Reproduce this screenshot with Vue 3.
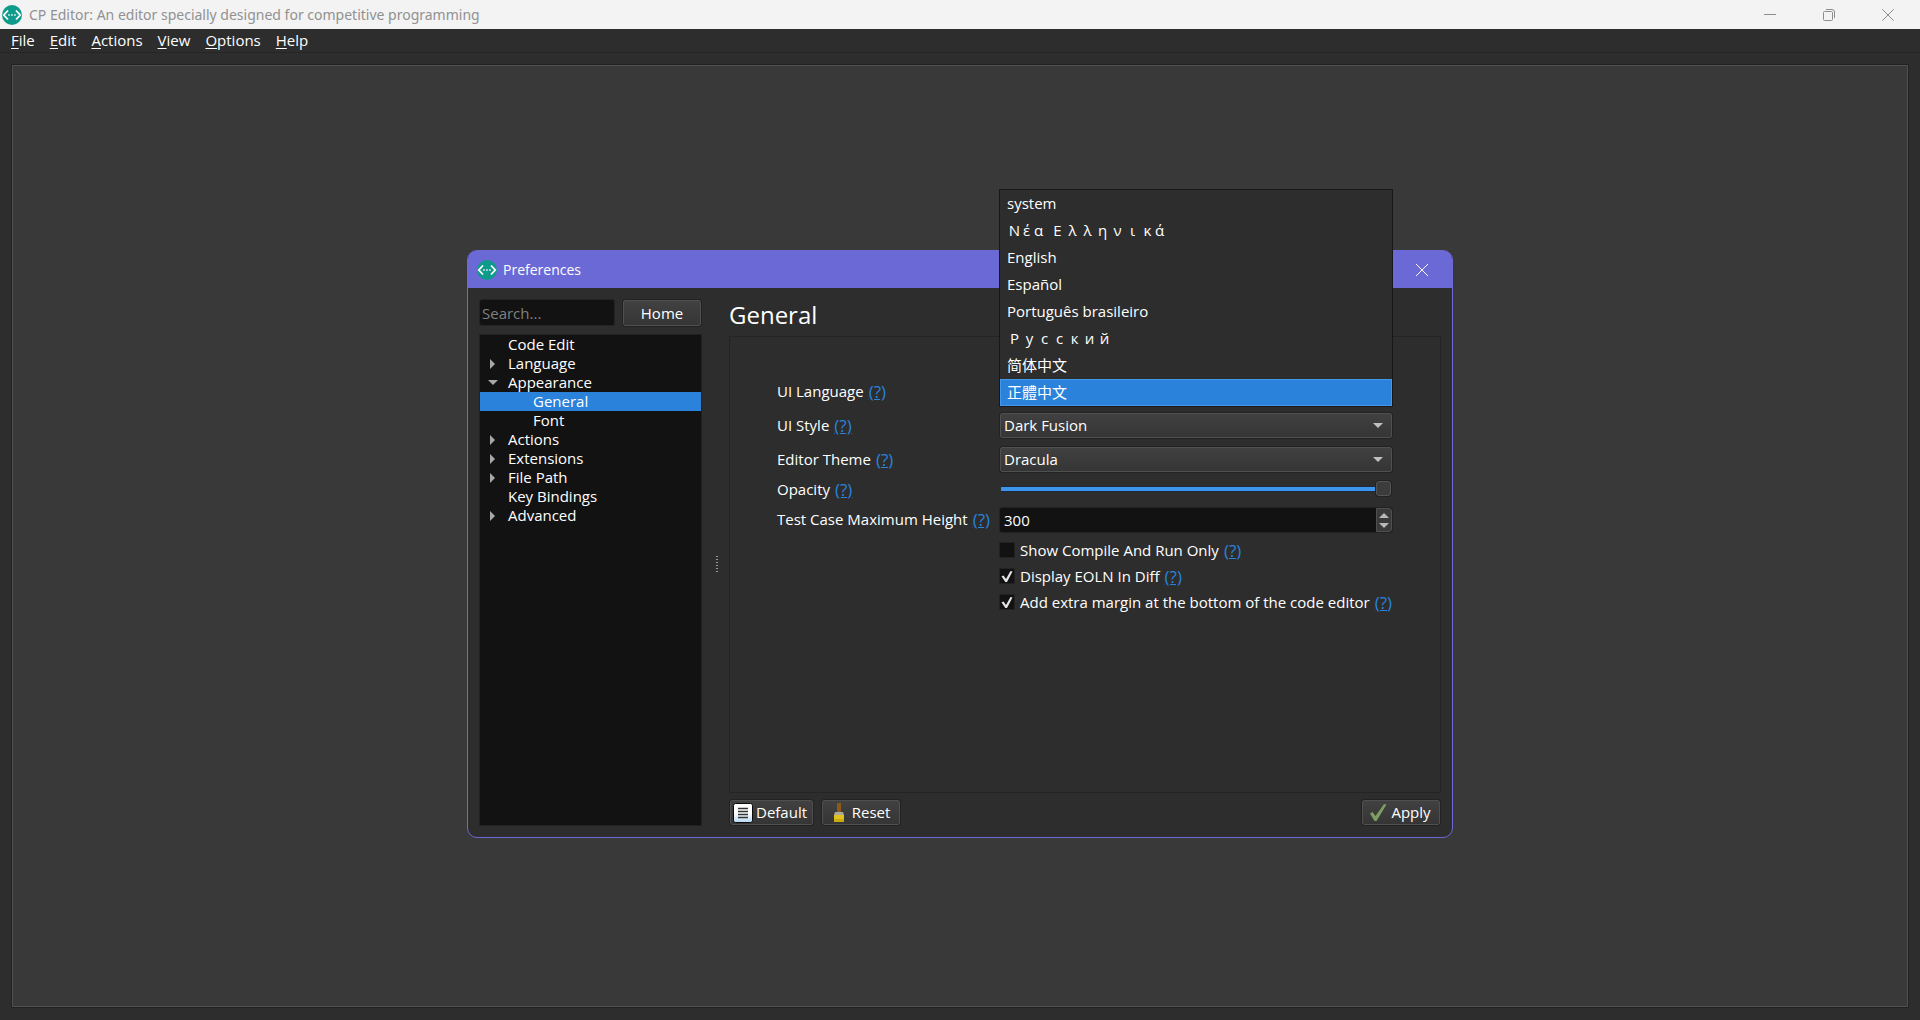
<script setup>
import { ref } from 'vue'

const menus = ['File', 'Edit', 'Actions', 'View', 'Options', 'Help']

const tree = [
  { name: 'Code Edit', level: 1 },
  { name: 'Language', level: 1, state: 'closed' },
  { name: 'Appearance', level: 1, state: 'open' },
  { name: 'General', level: 2, selected: true },
  { name: 'Font', level: 2 },
  { name: 'Actions', level: 1, state: 'closed' },
  { name: 'Extensions', level: 1, state: 'closed' },
  { name: 'File Path', level: 1, state: 'closed' },
  { name: 'Key Bindings', level: 1 },
  { name: 'Advanced', level: 1, state: 'closed' },
]

// "cells" gives the cell of each letter: w is full width, n is narrow, s is a space
const languages = [
  { name: 'system' },
  { name: 'Νέα Ελληνικά', cells: 'wnwswwwwwwwn' },
  { name: 'English' },
  { name: 'Español' },
  { name: 'Português brasileiro' },
  { name: 'Русский', cells: 'wwwwwww' },
  { name: '简体中文' },
  { name: '正體中文' },
]

const language = ref('正體中文')
const style = ref('Dark Fusion')
const theme = ref('Dracula')
const opacity = ref(100)
const height = ref(300)
const checks = ref([
  { id: 'compile', label: 'Show Compile And Run Only', on: false },
  { id: 'eoln', label: 'Display EOLN In Diff', on: true },
  { id: 'margin', label: 'Add extra margin at the bottom of the code editor', on: true },
])
</script>

<template>
  <div class="app">
    <header class="titlebar">
      <svg class="logo" viewBox="0 0 20 20" aria-hidden="true">
        <circle cx="10" cy="10" r="10" fill="#0f9b8b" />
        <path d="M6 5.500 1.800 10 6 14.500M14 5.500l4.200 4.500-4.200 4.500" fill="none" stroke="#fff" stroke-width="1.800" />
        <path d="M6.200 9.300h1.500v1.500H6.200zM9.200 9.300h1.500v1.500H9.200zM12.200 9.300h1.500v1.500h-1.500z" fill="#fff" />
      </svg>
      <h1>CP Editor: An editor specially designed for competitive programming</h1>
      <div class="controls">
        <button aria-label="Minimize">
          <svg viewBox="0 0 12 12"><path d="M0 5.500h12" /></svg>
        </button>
        <button aria-label="Restore">
          <svg viewBox="0 0 12 12">
            <rect x=".5" y="2.500" width="9" height="9" rx="1" />
            <path d="M3 .5h6a2.500 2.500 0 0 1 2.500 2.500v6" />
          </svg>
        </button>
        <button aria-label="Close">
          <svg viewBox="0 0 12 12"><path d="M.3.3l11.400 11.400M11.700.3.3 11.700" /></svg>
        </button>
      </div>
    </header>

    <nav class="menubar">
      <button v-for="m in menus" :key="m"><u>{{ m[0] }}</u>{{ m.slice(1) }}</button>
    </nav>

    <main class="workspace">
      <div class="pane">
        <section class="dialog" role="dialog" aria-labelledby="dialog-title">
          <header class="dialog-title">
            <svg class="logo" viewBox="0 0 20 20" aria-hidden="true">
              <circle cx="10" cy="10" r="10" fill="#0f9b8b" />
              <path d="M6 5.500 1.800 10 6 14.500M14 5.500l4.200 4.500-4.200 4.500" fill="none" stroke="#fff" stroke-width="1.800" />
              <path d="M6.200 9.300h1.500v1.500H6.200zM9.200 9.300h1.500v1.500H9.200zM12.200 9.300h1.500v1.500h-1.500z" fill="#fff" />
            </svg>
            <h2 id="dialog-title">Preferences</h2>
            <button class="close" aria-label="Close preferences">
              <svg viewBox="0 0 12 12"><path d="M0 0l12 12M12 0 0 12" /></svg>
            </button>
          </header>

          <div class="dialog-body">
            <aside class="side">
              <div class="search-row">
                <input type="text" class="search" placeholder="Search..." aria-label="Search" />
                <button class="btn home">Home</button>
              </div>
              <ul class="tree" role="tree">
                <li
                  v-for="(item, i) in tree"
                  :key="i"
                  role="treeitem"
                  :class="['level-' + item.level, item.state, { selected: item.selected }]"
                >
                  {{ item.name }}
                </li>
              </ul>
            </aside>

            <div class="splitter"><i v-for="n in 6" :key="n"></i></div>

            <div class="content">
              <h3>General</h3>
              <div class="frame">
                <div class="form">
                  <div class="label">
                    <label for="lang">UI Language</label><a href="#">(?)</a>
                  </div>
                  <div class="field">
                    <div class="combo">
                      <select id="lang" v-model="language">
                        <option v-for="l in languages" :key="l.name">{{ l.name }}</option>
                      </select>
                    </div>
                    <ul class="popup" role="listbox">
                      <li
                        v-for="l in languages"
                        :key="l.name"
                        role="option"
                        :aria-selected="l.name === language"
                        :class="{ current: l.name === language }"
                        @click="language = l.name"
                      >
                        <template v-if="l.cells"
                          ><span v-for="(c, i) in l.name" :key="i" :class="['cell', l.cells[i]]">{{ c }}</span></template
                        >
                        <template v-else>{{ l.name }}</template>
                      </li>
                    </ul>
                  </div>

                  <div class="label">
                    <label for="style">UI Style</label><a href="#">(?)</a>
                  </div>
                  <div class="combo">
                    <select id="style" v-model="style"><option>Dark Fusion</option></select>
                  </div>

                  <div class="label">
                    <label for="theme">Editor Theme</label><a href="#">(?)</a>
                  </div>
                  <div class="combo">
                    <select id="theme" v-model="theme"><option>Dracula</option></select>
                  </div>

                  <div class="label short">
                    <label for="opacity">Opacity</label><a href="#">(?)</a>
                  </div>
                  <input id="opacity" v-model="opacity" class="slider" type="range" min="0" max="100" />

                  <div class="label">
                    <label for="height">Test Case Maximum Height</label><a href="#">(?)</a>
                  </div>
                  <div class="spin">
                    <input id="height" v-model="height" type="number" />
                    <div class="steps">
                      <button aria-label="Increase" @click="height++"></button>
                      <button class="down" aria-label="Decrease" @click="height--"></button>
                    </div>
                  </div>

                  <div v-for="c in checks" :key="c.id" class="check">
                    <input :id="c.id" v-model="c.on" type="checkbox" />
                    <svg v-if="c.on" class="tick" viewBox="0 0 16 16" aria-hidden="true">
                      <path d="M2.500 8.300l2-.8 2.500 3.500L11.500 3l2 .4L8 14H6.300z" />
                    </svg>
                    <label :for="c.id">{{ c.label }}</label><a href="#">(?)</a>
                  </div>
                </div>
              </div>

              <footer class="actions">
                <button class="btn">
                  <svg viewBox="0 0 20 20" aria-hidden="true">
                    <defs>
                      <linearGradient id="page" x1="0" y1="0" x2="0" y2="1">
                        <stop offset=".5" stop-color="#fff" />
                        <stop offset="1" stop-color="#b5d8f3" />
                      </linearGradient>
                    </defs>
                    <rect x=".5" y=".5" width="19" height="19" rx="2" fill="url(#page)" stroke="#0b0b0b" />
                    <path d="M5 5.500h10M5 8.500h10M5 11.500h10M5 14.500h10" stroke="#333" stroke-width="1.300" />
                  </svg>
                  Default
                </button>
                <button class="btn">
                  <svg viewBox="0 0 20 20" aria-hidden="true">
                    <path d="M8 0h4v10H8z" fill="#8a5a1c" />
                    <path d="M6 9h8l1 3H5z" fill="#aaa99a" />
                    <path d="M5 12h10v7H5z" fill="#e0c21f" />
                    <path d="M5 16h10v3H5z" fill="#c9a90c" />
                  </svg>
                  Reset
                </button>
                <button class="btn apply">
                  <svg viewBox="0 0 20 20" aria-hidden="true">
                    <path d="M2 10.500l2.500-1.500 3 4L16 1l2.500.5L8.500 18H6.500z" fill="#7c9e62" />
                  </svg>
                  Apply
                </button>
              </footer>
            </div>
          </div>
        </section>
      </div>
    </main>
  </div>
</template>

<style>
body {
  background: #2d2d2d;
}
</style>

<style scoped>
* {
  box-sizing: border-box;
}
.app {
  display: flex;
  flex-direction: column;
  min-height: 100vh;
  background: #2d2d2d;
  color: #fff;
  font: 15px/19px 'Open Sans', 'Noto Sans CJK TC', sans-serif;
}
button,
input,
select {
  margin: 0;
  padding: 0;
  border: 0;
  background: none;
  color: inherit;
  font: inherit;
}
h1,
h2,
h3,
ul {
  margin: 0;
  padding: 0;
  font-weight: inherit;
  list-style: none;
}
.logo {
  width: 20px;
  height: 20px;
  flex: none;
}

.titlebar {
  display: flex;
  align-items: center;
  gap: 7px;
  height: 29px;
  padding: 0 3px 0 2px;
  background: #f3f3f3;
  color: #919191;
}
.titlebar h1 {
  flex: 1;
  font: 14px/19px 'Noto Sans', sans-serif;
}
.controls {
  display: flex;
}
.controls button {
  display: flex;
  align-items: center;
  justify-content: center;
  width: 59px;
  height: 29px;
}
.controls svg,
.close svg {
  width: 12px;
  height: 12px;
  fill: none;
  stroke: #8d8d8d;
}

.menubar {
  display: flex;
  gap: 15px;
  height: 24px;
  padding: 0 11px;
  border-bottom: 1px solid #262626;
}
.menubar u {
  text-underline-offset: 2px;
}

.workspace {
  display: flex;
  flex: 1;
  padding: 11px 11px 12px;
}
.pane {
  display: flex;
  flex: 1;
  align-items: center;
  justify-content: center;
  padding-top: 16px;
  border: 1px solid #222;
  background: #393939;
  box-shadow: inset 0 0 0 1px #515151;
}

.dialog {
  display: flex;
  flex-direction: column;
  width: 986px;
  max-width: 100%;
  min-height: 588px;
  border: 1px solid #6b69d6;
  border-radius: 10px;
  background: #2d2d2d;
}
.dialog-title {
  display: flex;
  align-items: center;
  gap: 6px;
  height: 37px;
  padding-left: 9px;
  border-radius: 8px 8px 0 0;
  background: #6b69d6;
}
.dialog-title h2 {
  flex: 1;
  font-size: 14px;
}
.close {
  display: flex;
  align-items: center;
  justify-content: center;
  width: 60px;
  height: 37px;
}
.close svg {
  stroke: #fff;
}
.dialog-body {
  display: flex;
  flex: 1;
  padding: 11px;
}

.side {
  display: flex;
  flex-direction: column;
  gap: 8px;
  width: 223px;
}
.search-row {
  display: flex;
  align-items: flex-end;
  gap: 8px;
  padding-right: 1px;
}
.search {
  flex: 1;
  min-width: 0;
  height: 27px;
  padding: 0 2px;
  border: 1px solid #242424;
  border-radius: 3px;
  background: #121212;
}
.search::placeholder {
  color: #808080;
  opacity: 1;
}
.btn {
  display: flex;
  align-items: center;
  justify-content: center;
  height: 26px;
  border: 1px solid #505050;
  border-radius: 2px;
  outline: 1px solid #222;
  background: linear-gradient(#414141, #353535);
}
.home {
  width: 78px;
}
.tree {
  flex: 1;
  border: 1px solid #222;
  background: #121212;
}
.tree li {
  display: flex;
  align-items: center;
  height: 19px;
}
.level-1 {
  padding-left: 28px;
}
.level-2 {
  padding-left: 53px;
}
.closed,
.open {
  padding-left: 0;
}
.closed::before {
  width: 0;
  margin: 0 13px 0 10px;
  border: 5px solid transparent;
  border-right-width: 0;
  border-left-color: #a8a8a8;
  content: '';
}
.open::before {
  width: 0;
  margin: 0 10px 0 8px;
  border: 5px solid transparent;
  border-bottom-width: 0;
  border-top-color: #a8a8a8;
  content: '';
}
.selected {
  background: #2a82da;
}

.splitter {
  display: flex;
  flex-direction: column;
  align-items: center;
  justify-content: center;
  gap: 2px;
  width: 27px;
  padding: 3px 0 0 3px;
}
.splitter i {
  width: 2px;
  height: 1px;
  background: #9a9a9a;
}

.content {
  display: flex;
  flex: 1;
  flex-direction: column;
  min-width: 0;
}
.content h3 {
  height: 37px;
  font-size: 24px;
  line-height: 32px;
}
.frame {
  flex: 1;
  padding: 42px 47px;
  border: 1px solid #242424;
}
.form {
  display: grid;
  grid-template-columns: 214px 1fr;
  gap: 8px;
}
.label,
.check {
  display: flex;
  align-items: center;
  gap: 5px;
  white-space: nowrap;
}
.label {
  height: 24px;
}
.short {
  height: 16px;
}
a {
  color: #2a82da;
  font-size: 17px;
  text-decoration: underline;
}
.field {
  position: relative;
}
.combo {
  position: relative;
  display: flex;
  padding: 0 1px 1px;
}
.combo::after {
  position: absolute;
  top: 10px;
  right: 10px;
  border: 5px solid transparent;
  border-bottom-width: 0;
  border-top-color: #c0c0c0;
  content: '';
  pointer-events: none;
}
.combo select {
  flex: 1;
  height: 25px;
  padding: 0 3px;
  appearance: none;
  border: 1px solid #505050;
  border-radius: 2px;
  outline: 1px solid #222;
  background: linear-gradient(#414141, #353535);
}
.popup {
  position: absolute;
  right: 0;
  bottom: -2px;
  left: 0;
  z-index: 2;
  border: 1px solid #181818;
  background: #2d2d2d;
}
.popup li {
  display: flex;
  align-items: center;
  height: 27px;
  padding: 0 7px;
}
.popup .current {
  border: 1px solid #4598ea;
  padding: 0 6px;
  background: #2a82da;
}
.cell {
  width: 15px;
  text-align: center;
}
.cell.n {
  width: 9px;
}
.cell.s {
  width: 4px;
}
.slider {
  width: 100%;
  height: 16px;
  margin-bottom: 2px;
  padding: 0 2px;
  appearance: none;
}
.slider::-webkit-slider-runnable-track {
  height: 6px;
  border: 1px solid #1d2a38;
  border-width: 1px 0;
  background: #3d94ec;
}
.slider::-webkit-slider-thumb {
  position: relative;
  width: 15px;
  height: 15px;
  margin-top: -6px;
  appearance: none;
  border: 1px solid #555;
  border-radius: 3px;
  box-shadow: 0 0 0 1px #222;
  background: #3c3c3c;
}
.spin {
  display: flex;
  height: 26px;
  border: 1px solid #222;
  border-radius: 3px;
  background: #121212;
}
.spin input {
  flex: 1;
  min-width: 0;
  padding: 0 4px;
  appearance: textfield;
}
.spin input::-webkit-inner-spin-button {
  appearance: none;
}
.steps {
  display: flex;
  flex-direction: column;
  justify-content: center;
  gap: 5px;
  width: 16px;
  border: 1px solid #505050;
  border-radius: 0 3px 3px 0;
  background: #3a3a3a;
}
.steps button {
  width: 0;
  height: 0;
  margin: 0 auto;
  border: 5px solid transparent;
  border-top-width: 0;
  border-bottom-color: #b8b8b8;
}
.steps .down {
  border-width: 5px 5px 0;
  border-top-color: #b8b8b8;
}
.check {
  position: relative;
  grid-column: 2;
  height: 18px;
}
.check input {
  width: 16px;
  height: 16px;
  appearance: none;
  border: 1px solid #222;
  background: #121212;
}
.tick {
  position: absolute;
  left: 0;
  width: 16px;
  height: 16px;
  fill: #e4e4e4;
  pointer-events: none;
}

.actions {
  display: flex;
  gap: 9px;
  padding: 7px 1px 1px;
}
.actions .btn {
  gap: 3px;
  height: 25px;
  min-width: 78px;
  padding: 0 5px 0 2px;
}
.actions svg {
  width: 20px;
  height: 20px;
}
.apply {
  margin-left: auto;
}
</style>
